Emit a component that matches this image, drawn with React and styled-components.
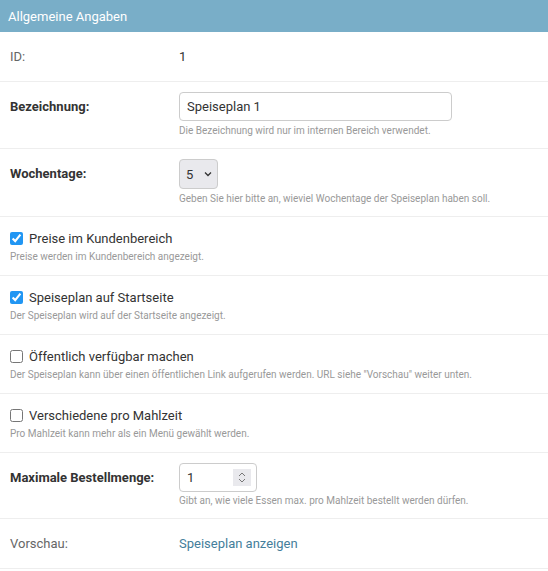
import React from "react"
import styled, { createGlobalStyle } from "styled-components"

const GlobalStyle = createGlobalStyle`
    html, body {
        margin: 0;
        padding: 0;
        background: #fff;
    }
    body {
        font-family: Roboto, "Liberation Sans", sans-serif;
        color: #333;
    }
`

const Fieldset = styled.div`
    width: 548px;
`

const Header = styled.h2`
    margin: 0;
    height: 32px;
    display: flex;
    align-items: center;
    padding: 0 8px;
    background-color: #79aec8;
    color: #fff;
    font-size: 13px;
    font-weight: 400;
`

const Row = styled.div`
    display: flex;
    padding: 10px;
    border-bottom: 1px solid #eee;
`

const Label = styled.label`
    width: 169px;
    flex-shrink: 0;
    height: 29px;
    display: flex;
    align-items: center;
    font-size: 13px;
    font-weight: ${p => (p.bold ? 700 : 400)};
    color: ${p => (p.bold ? "#333" : "#666")};
`

const Field = styled.div`
    display: flex;
    flex-direction: column;
    align-items: flex-start;
`

const Value = styled.div`
    height: 29px;
    display: flex;
    align-items: center;
    font-size: 13px;
    color: ${p => (p.link ? "#447e9b" : "#333")};
`

const Help = styled.div`
    margin-top: ${p => (p.gap !== undefined ? p.gap : 2)}px;
    line-height: ${p => p.lh || 15}px;
    font-size: 10px;
    color: #999;
`

const TextInput = styled.input`
    box-sizing: border-box;
    width: 273px;
    height: 29px;
    padding: 0 7px;
    border: 1px solid #ccc;
    border-radius: 4px;
    font-family: inherit;
    font-size: 13px;
    color: #333;
    outline: none;
`

const Box = styled.div`
    box-sizing: border-box;
    display: flex;
    align-items: center;
    height: ${p => p.h || 29}px;
    width: ${p => p.w}px;
    border: 1px solid #ccc;
    border-radius: 4px;
    background: ${p => p.bg || "#fff"};
`

const Select = styled.select`
    appearance: none;
    border: none;
    background: transparent;
    padding: 0 0 0 6px;
    width: 24px;
    font-family: inherit;
    font-size: 13px;
    color: #333;
    outline: none;
`

const NumberInput = styled.input`
    appearance: textfield;
    border: none;
    background: transparent;
    padding: 0 0 0 7px;
    width: 46px;
    font-family: inherit;
    font-size: 13px;
    color: #333;
    outline: none;
    &::-webkit-inner-spin-button,
    &::-webkit-outer-spin-button {
        -webkit-appearance: none;
        margin: 0;
    }
`

const Spinner = styled.span`
    display: flex;
    align-items: center;
    justify-content: center;
    width: 18px;
    height: 17px;
    background: #e9e9ed;
`

const CheckRow = styled.div`
    padding: 10px;
    border-bottom: 1px solid #eee;
`

const CheckLabel = styled.label`
    display: flex;
    align-items: center;
    height: 22px;
    font-size: 13px;
    color: #333;
`

const Checkbox = styled.input`
    width: 13px;
    height: 13px;
    margin: 0 6px 0 0;
    accent-color: #2196f3;
`

function Chevron() {
    return (
        <svg width="8" height="6" viewBox="0 0 8 6">
            <path d="M1 1.5 L4 4.5 L7 1.5" fill="none" stroke="#333" strokeWidth="1.3" />
        </svg>
    )
}

function Arrows() {
    return (
        <svg width="10" height="13" viewBox="0 0 10 13">
            <path d="M2 5 L5 2 L8 5" fill="none" stroke="#777" strokeWidth="1" />
            <path d="M2 8 L5 11 L8 8" fill="none" stroke="#777" strokeWidth="1" />
        </svg>
    )
}

const checks = [
    { label: "Preise im Kundenbereich", help: "Preise werden im Kundenbereich angezeigt.", checked: true },
    { label: "Speiseplan auf Startseite", help: "Der Speiseplan wird auf der Startseite angezeigt.", checked: true },
    { label: "Öffentlich verfügbar machen", help: "Der Speiseplan kann über einen öffentlichen Link aufgerufen werden. URL siehe \"Vorschau\" weiter unten.", checked: false },
    { label: "Verschiedene pro Mahlzeit", help: "Pro Mahlzeit kann mehr als ein Menü gewählt werden.", checked: false },
]

export default function App() {
    return (
        <Fieldset>
            <GlobalStyle />
            <Header>Allgemeine Angaben</Header>

            <Row>
                <Label>ID:</Label>
                <Value>1</Value>
            </Row>

            <Row>
                <Label bold>Bezeichnung:</Label>
                <Field>
                    <TextInput defaultValue="Speiseplan 1" />
                    <Help>Die Bezeichnung wird nur im internen Bereich verwendet.</Help>
                </Field>
            </Row>

            <Row>
                <Label bold>Wochentage:</Label>
                <Field>
                    <Box w={39} h={30} bg="#e9e9ed">
                        <Select defaultValue="5">
                            {[1, 2, 3, 4, 5, 6, 7].map(n => <option key={n}>{n}</option>)}
                        </Select>
                        <Chevron />
                    </Box>
                    <Help>Geben Sie hier bitte an, wieviel Wochentage der Speiseplan haben soll.</Help>
                </Field>
            </Row>

            {checks.map(c => (
                <CheckRow key={c.label}>
                    <CheckLabel>
                        <Checkbox type="checkbox" defaultChecked={c.checked} />
                        {c.label}
                    </CheckLabel>
                    <Help gap={0} lh={16}>{c.help}</Help>
                </CheckRow>
            ))}

            <Row>
                <Label bold>Maximale Bestellmenge:</Label>
                <Field>
                    <Box w={78}>
                        <NumberInput type="number" defaultValue="1" />
                        <Spinner><Arrows /></Spinner>
                    </Box>
                    <Help gap={1}>Gibt an, wie viele Essen max. pro Mahlzeit bestellt werden dürfen.</Help>
                </Field>
            </Row>

            <Row>
                <Label>Vorschau:</Label>
                <Value link>Speiseplan anzeigen</Value>
            </Row>
        </Fieldset>
    )
}
